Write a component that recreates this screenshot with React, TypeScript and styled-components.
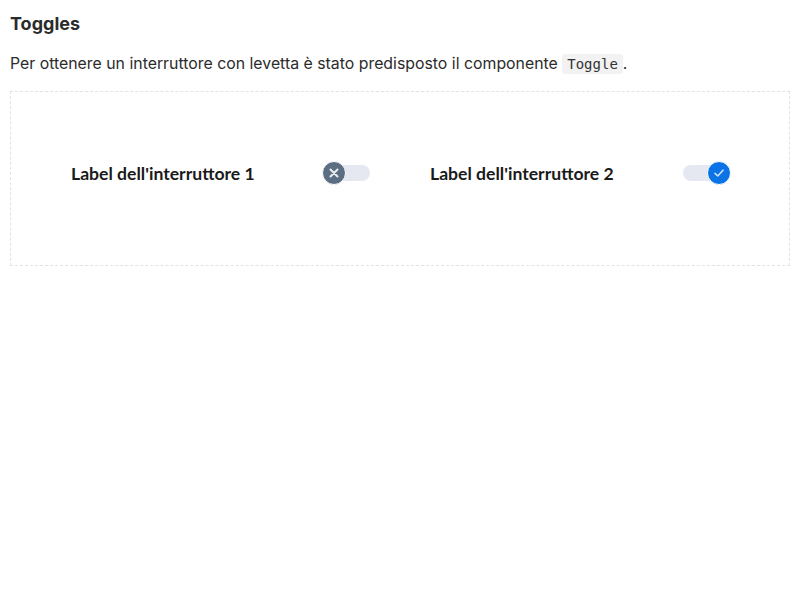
import styled, { createGlobalStyle } from "styled-components";

const GlobalStyle = createGlobalStyle`
  body {
    margin: 0;
    background: #fff;
    font-family: "Inter", "Liberation Sans", sans-serif;
    color: #222;
  }
`;

const Page = styled.div`
  padding: 10px 10px;
`;

const Title = styled.h3`
  margin: 2px 0 0;
  font-size: 18px;
  font-weight: 700;
  line-height: 24px;
  color: #2b2b2b;
`;

const Text = styled.p`
  margin: 16px 0 0;
  font-size: 15.85px;
  line-height: 24px;
  color: #2b2b2b;
`;

const Code = styled.code`
  font-family: "DejaVu Sans Mono", monospace;
  font-size: 14px;
  background: #f2f2f2;
  border-radius: 3px;
  padding: 2px 5px;
  color: #333;
`;

const Example = styled.div`
  margin-top: 15px;
  border: 1px dashed #e3e3e3;
  padding: 65px 30px 76px;
  display: grid;
  grid-template-columns: 1fr 1fr;
`;

const Column = styled.div`
  padding: 0 30px;
`;

const Row = styled.label`
  display: flex;
  align-items: center;
  justify-content: space-between;
  height: 32px;
  font-family: "Lato", "Liberation Sans", sans-serif;
  font-weight: 700;
  font-size: 17.6px;
  color: #1a1a1a;
`;

const Track = styled.span<{ $on: boolean }>`
  position: relative;
  display: inline-block;
  width: 47px;
  height: 16px;
  border-radius: 8px;
  background: #e5e8f0;
  margin-right: ${(p) => (p.$on ? "-1px" : "0")};
`;

const Knob = styled.span<{ $on: boolean }>`
  position: absolute;
  top: 50%;
  left: ${(p) => (p.$on ? "24px" : "-1px")};
  width: 24px;
  height: 24px;
  margin-top: -12px;
  box-sizing: border-box;
  border-radius: 50%;
  border: 1px solid #fff;
  background: ${(p) => (p.$on ? "#0a73e6" : "#5c6f82")};
  display: flex;
  align-items: center;
  justify-content: center;
`;

function Toggle({ on }: { on: boolean }) {
  return (
    <Track $on={on}>
      <Knob $on={on}>
        {on ? (
          <svg width="12" height="12" viewBox="0 0 12 12">
            <path d="M2 6.3 L4.8 9 L10 3.2" stroke="#cfe3fa" strokeWidth="1.6" fill="none" strokeLinecap="round" strokeLinejoin="round" />
          </svg>
        ) : (
          <svg width="12" height="12" viewBox="0 0 12 12">
            <path d="M2.5 2.5 L9.5 9.5 M9.5 2.5 L2.5 9.5" stroke="#e8ecf0" strokeWidth="2" strokeLinecap="round" />
          </svg>
        )}
      </Knob>
    </Track>
  );
}

export default function App() {
  return (
    <>
      <GlobalStyle />
      <Page>
        <Title>Toggles</Title>
        <Text>
          Per ottenere un interruttore con levetta è stato predisposto il componente <Code>Toggle</Code>.
        </Text>
        <Example>
          <Column>
            <Row>
              Label dell'interruttore 1
              <Toggle on={false} />
            </Row>
          </Column>
          <Column>
            <Row>
              Label dell'interruttore 2
              <Toggle on={true} />
            </Row>
          </Column>
        </Example>
      </Page>
    </>
  );
}
